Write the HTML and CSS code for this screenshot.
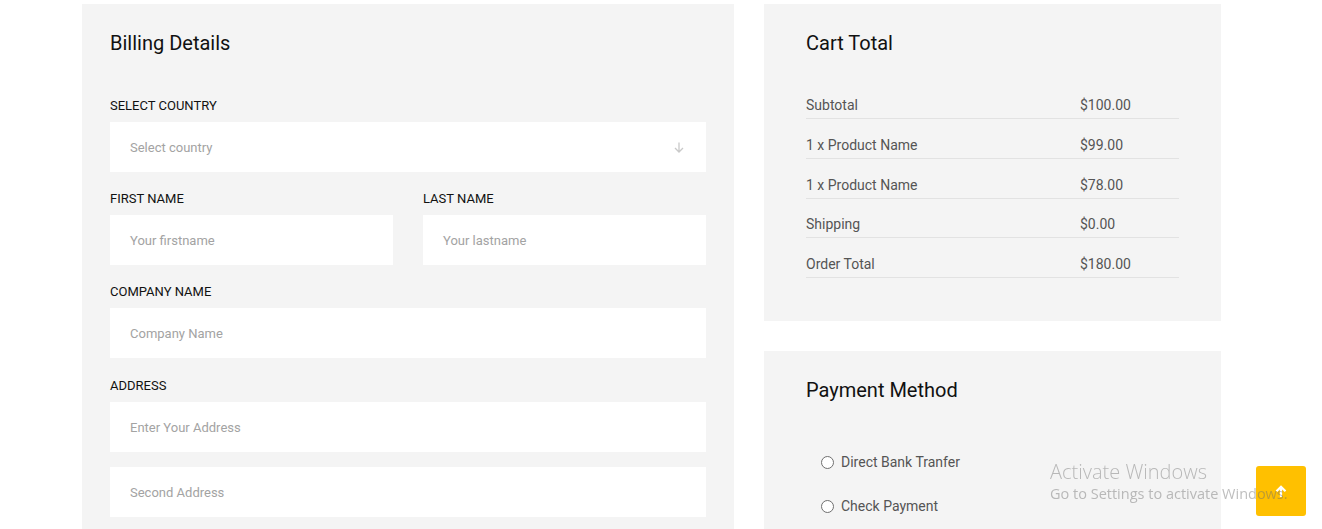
FILE: index.html
```html
<!DOCTYPE html>
<html lang="en">
<head>
<meta charset="utf-8">
<title>Checkout</title>
<link rel="stylesheet" href="styles.css">
</head>
<body>
<div class="page">
  <section class="card billing">
    <h3 class="card-title">Billing Details</h3>
    <div class="group">
      <label class="label">Select Country</label>
      <div class="field select">
        <span class="placeholder">Select country</span>
        <svg class="caret" width="10" height="11" viewBox="0 0 10 11"><path d="M5 0.5V10M1 6l4 4 4-4" fill="none" stroke="#c9c9c9" stroke-width="1.3"/></svg>
      </div>
    </div>
    <div class="group-row">
      <div class="group">
        <label class="label">First Name</label>
        <div class="field"><span class="placeholder">Your firstname</span></div>
      </div>
      <div class="group">
        <label class="label">Last Name</label>
        <div class="field"><span class="placeholder">Your lastname</span></div>
      </div>
    </div>
    <div class="group">
      <label class="label">Company Name</label>
      <div class="field"><span class="placeholder">Company Name</span></div>
    </div>
    <div class="group address">
      <label class="label">Address</label>
      <div class="field"><span class="placeholder">Enter Your Address</span></div>
      <div class="field second"><span class="placeholder">Second Address</span></div>
    </div>
  </section>

  <div class="side">
    <section class="card cart">
      <h3 class="card-title">Cart Total</h3>
      <div class="rows">
        <div class="row"><span>Subtotal</span><span>$100.00</span></div>
        <div class="row"><span>1 x Product Name</span><span>$99.00</span></div>
        <div class="row"><span>1 x Product Name</span><span>$78.00</span></div>
        <div class="row"><span>Shipping</span><span>$0.00</span></div>
        <div class="row"><span>Order Total</span><span>$180.00</span></div>
      </div>
    </section>
    <section class="card payment">
      <h3 class="card-title">Payment Method</h3>
      <div class="radios">
        <div class="radio"><span class="dot"></span><span>Direct Bank Tranfer</span></div>
        <div class="radio"><span class="dot"></span><span>Check Payment</span></div>
      </div>
    </section>
  </div>
</div>

<button class="to-top" type="button" aria-label="Back to top">
  <svg width="12" height="13" viewBox="0 0 12 13"><path d="M6 12V2M1.5 6.2L6 1.7l4.5 4.5" fill="none" stroke="#fff" stroke-width="2.2"/></svg>
</button>

<div class="activate">
  <div class="act-title">Activate Windows</div>
  <div class="act-sub">Go to Settings to activate Windows.</div>
</div>
</body>
</html>
```

FILE: styles.css
```css
html, body {
  margin: 0;
  padding: 0;
  overflow: hidden;
  height: 529px;
  background: #fff;
}

body {
  font-family: Roboto, "Liberation Sans", Arial, sans-serif;
  color: #111;
}

.page {
  display: flex;
  align-items: flex-start;
  gap: 30px;
  padding: 4px 0 0 82px;
}

.card {
  background: #f4f4f4;
  box-sizing: border-box;
}

.card-title {
  margin: 0;
  font-size: 20px;
  line-height: 24px;
  font-weight: 400;
  color: #111;
}

/* Billing */
.billing {
  width: 652px;
  height: 560px;
  padding: 27px 28px 0;
}

.billing .card-title {
  margin-bottom: 41px;
}

.group {
  display: flex;
  flex-direction: column;
  margin-bottom: 17px;
}

.group.address {
  padding-top: 1px;
}

.group-row {
  display: grid;
  grid-template-columns: 1fr 1fr;
  gap: 30px;
}

.label {
  font-size: 13px;
  line-height: 18px;
  padding-top: 1px;
  text-transform: uppercase;
  color: #111;
  margin-bottom: 7px;
}

.field {
  height: 50px;
  background: #fff;
  display: flex;
  align-items: center;
  justify-content: space-between;
  padding: 0 22px 0 20px;
}

.field.second {
  margin-top: 15px;
}

.placeholder {
  font-size: 13px;
  color: #a3a3a3;
}

.caret {
  display: block;
}

/* Side */
.side {
  display: flex;
  flex-direction: column;
  gap: 30px;
  width: 457px;
}

.cart {
  padding: 27px 42px 43px;
}

.rows {
  margin-top: 40px;
}

.row {
  display: grid;
  grid-template-columns: 274px 1fr;
  font-size: 14px;
  line-height: 20px;
  color: #555;
  padding: 16px 0 3px;
  border-bottom: 1px solid #e2e2e2;
}

.row:first-child {
  padding-top: 0;
}

.row:nth-child(4) {
  padding-top: 15px;
}

.payment {
  height: 200px;
  padding: 27px 42px 0;
}

.payment .card-title {
  margin-bottom: 50px;
}

.radios {
  display: flex;
  flex-direction: column;
  gap: 24px;
  padding-left: 15px;
}

.radio {
  display: flex;
  align-items: center;
  gap: 7px;
  font-size: 14px;
  line-height: 20px;
  color: #555;
}

.dot {
  width: 11px;
  height: 11px;
  border: 1px solid #6f6f6f;
  border-radius: 50%;
  background: #fff;
}

/* Back to top */
.to-top {
  position: fixed;
  left: 1256px;
  top: 466px;
  width: 50px;
  height: 50px;
  border: 0;
  border-radius: 3px;
  background: #ffc000;
  display: flex;
  align-items: center;
  justify-content: center;
  padding: 0;
}

.to-top svg {
  display: block;
}

/* OS watermark overlay */
.activate {
  position: fixed;
  left: 1050px;
  top: 459px;
  font-family: "Open Sans", "Noto Sans", sans-serif;
  color: rgba(110, 110, 110, 0.45);
  white-space: nowrap;
  pointer-events: none;
}

.act-title {
  font-size: 20px;
  line-height: 25px;
  font-weight: 300;
}

.act-sub {
  font-size: 14.5px;
  line-height: 20px;
  font-weight: 400;
}
```
